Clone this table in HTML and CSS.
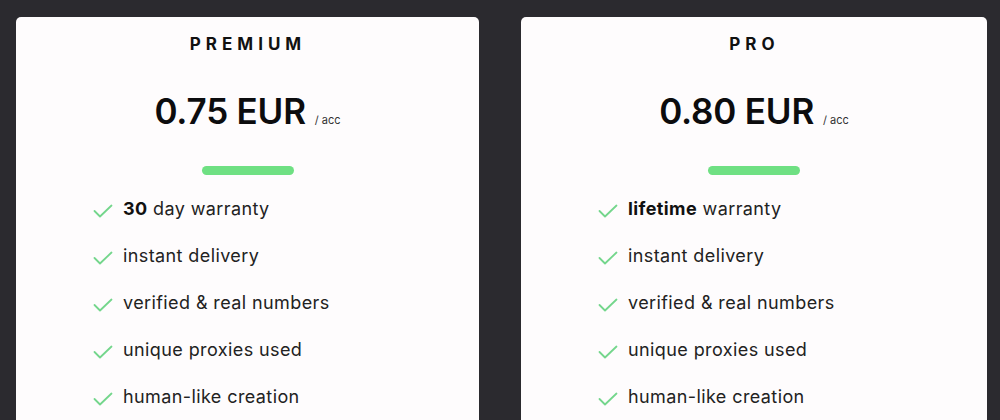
FILE: index.html
```html
<!DOCTYPE html>
<html>
<head>
<meta charset="utf-8">
<link rel="stylesheet" href="styles.css">
</head>
<body>
<div class="plans">
  <div class="card">
    <div class="title">PREMIUM</div>
    <div class="price"><span class="amount">0.75 EUR</span><span class="unit">/ acc</span></div>
    <div class="bar"></div>
    <ul class="features">
      <li><svg class="check" viewBox="0 0 20 14"><polyline points="1.5,7 7,12.5 18.5,1.5"/></svg><span><b>30</b> day warranty</span></li>
      <li><svg class="check" viewBox="0 0 20 14"><polyline points="1.5,7 7,12.5 18.5,1.5"/></svg><span>instant delivery</span></li>
      <li><svg class="check" viewBox="0 0 20 14"><polyline points="1.5,7 7,12.5 18.5,1.5"/></svg><span>verified &amp; real numbers</span></li>
      <li><svg class="check" viewBox="0 0 20 14"><polyline points="1.5,7 7,12.5 18.5,1.5"/></svg><span>unique proxies used</span></li>
      <li><svg class="check" viewBox="0 0 20 14"><polyline points="1.5,7 7,12.5 18.5,1.5"/></svg><span>human-like creation</span></li>
    </ul>
  </div>
  <div class="card">
    <div class="title">PRO</div>
    <div class="price"><span class="amount">0.80 EUR</span><span class="unit">/ acc</span></div>
    <div class="bar"></div>
    <ul class="features">
      <li><svg class="check" viewBox="0 0 20 14"><polyline points="1.5,7 7,12.5 18.5,1.5"/></svg><span><b>lifetime</b> warranty</span></li>
      <li><svg class="check" viewBox="0 0 20 14"><polyline points="1.5,7 7,12.5 18.5,1.5"/></svg><span>instant delivery</span></li>
      <li><svg class="check" viewBox="0 0 20 14"><polyline points="1.5,7 7,12.5 18.5,1.5"/></svg><span>verified &amp; real numbers</span></li>
      <li><svg class="check" viewBox="0 0 20 14"><polyline points="1.5,7 7,12.5 18.5,1.5"/></svg><span>unique proxies used</span></li>
      <li><svg class="check" viewBox="0 0 20 14"><polyline points="1.5,7 7,12.5 18.5,1.5"/></svg><span>human-like creation</span></li>
    </ul>
  </div>
</div>
</body>
</html>
```
FILE: styles.css
```css
html, body {
  margin: 0;
  padding: 0;
  background: #2b2a2f;
  font-family: Inter, "Noto Sans", sans-serif;
  color: #1c1c1e;
  height: 420px;
  overflow: hidden;
}
.plans {
  display: grid;
  grid-template-columns: 463px 466px;
  gap: 42px;
  padding: 17px 0 0 16px;
}
.card {
  background: #fefcfd;
  border-radius: 5px 5px 0 0;
  padding-top: 17px;
  height: 403px;
  box-sizing: border-box;
  overflow: hidden;
}
.title {
  text-align: center;
  font-size: 17px;
  font-weight: 700;
  letter-spacing: 5px;
  padding-left: 1px;
  color: #111;
}
.price {
  margin-top: 36px;
  display: flex;
  justify-content: center;
  align-items: baseline;
  gap: 9px;
  color: #0c0c0e;
}
.amount {
  font-size: 35px;
  font-weight: 600;
  letter-spacing: -0.2px;
}
.unit {
  font-size: 11px;
  color: #333;
}
.bar {
  width: 92px;
  height: 9px;
  border-radius: 5px;
  background: #6fe083;
  margin: 34px auto 0;
}
.features {
  list-style: none;
  margin: 10px 0 0;
  padding: 0 0 0 77px;
}
.features li {
  display: flex;
  align-items: center;
  height: 47px;
  font-size: 18px;
  letter-spacing: 0.4px;
  color: #222;
}
.features b {
  font-weight: 700;
  color: #111;
}
.check {
  width: 20px;
  height: 14px;
  margin-right: 10px;
  margin-top: 4px;
  fill: none;
  stroke: #74d68c;
  stroke-width: 1.8;
  stroke-linecap: round;
  stroke-linejoin: round;
}
```
